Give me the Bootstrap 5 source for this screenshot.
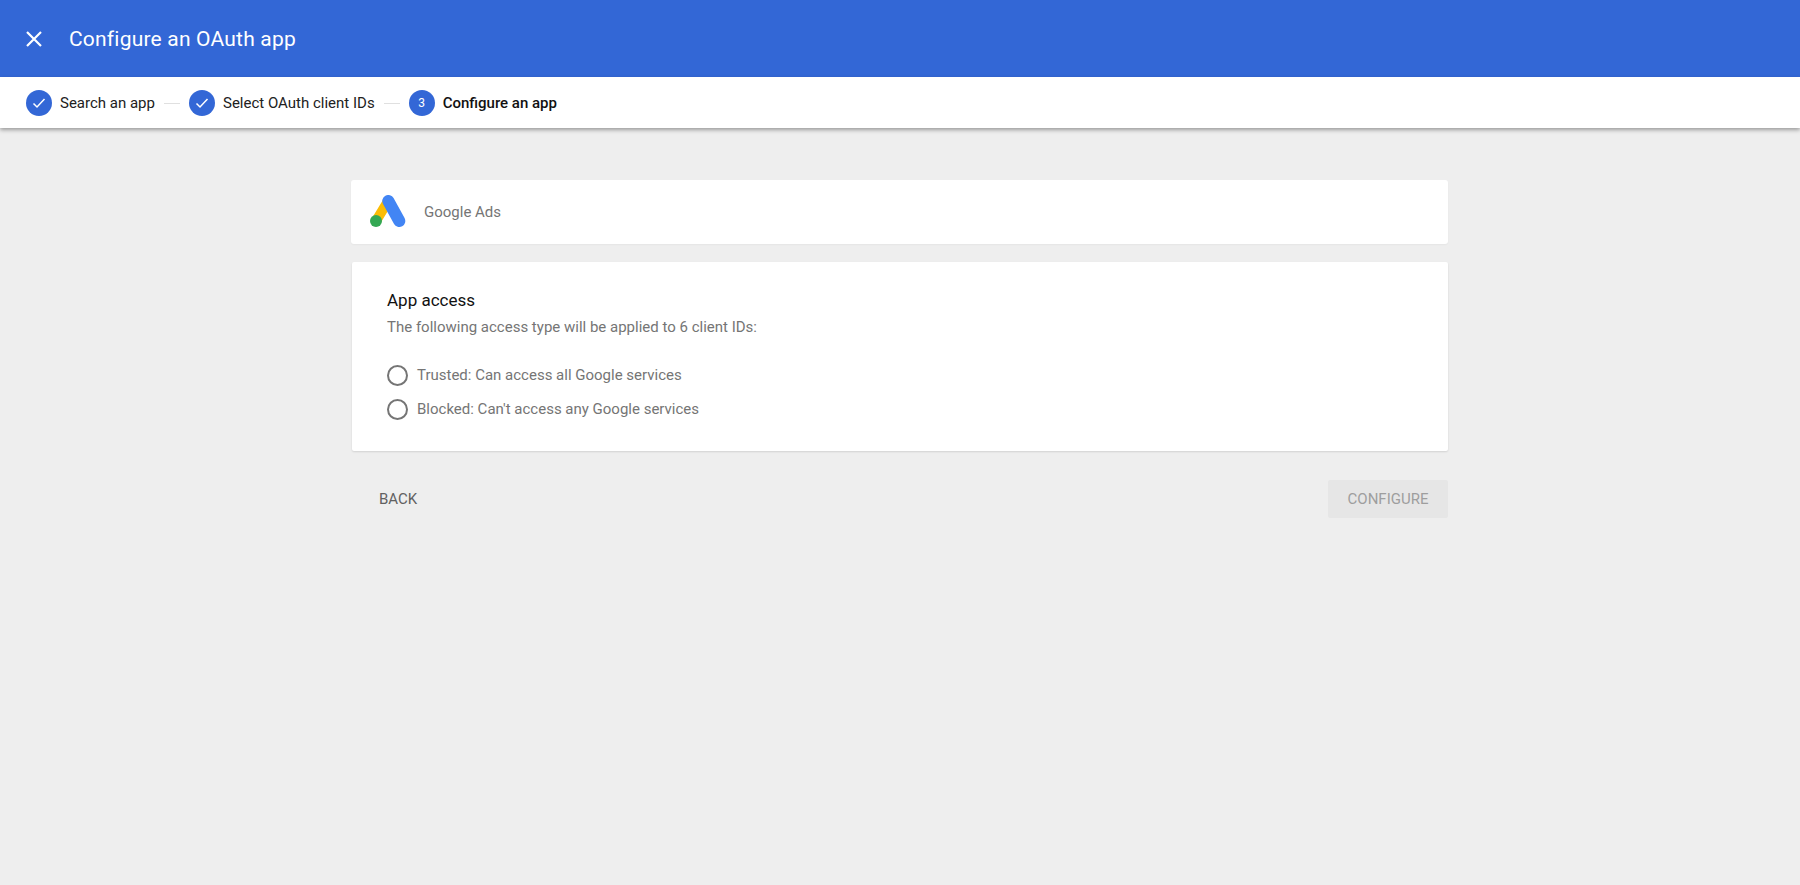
<!doctype html>
<html lang="en">
<head>
<meta charset="utf-8">
<title>Configure an OAuth app</title>
<link rel="stylesheet" href="https://cdn.jsdelivr.net/npm/bootstrap@5.3.0/dist/css/bootstrap.min.css">
<style>
html, body { height: 100%; }
body { background: #eee; font-family: Roboto, "Liberation Sans", sans-serif; color: #202124; overflow: hidden; }
.app-top { background: #3367d6; height: 77px; padding-left: 23px; color: #fff; }
.app-top h1 { font-size: 21px; font-weight: 400; margin: 0 0 0 24px; line-height: 24px; letter-spacing: .2px; }
.stepper { background: #fff; height: 51px; padding: 1px 0 0 26px; font-size: 15px; box-shadow: 0 2px 4px rgba(0,0,0,.35); position: relative; }
.step-dot { width: 26px; height: 26px; border-radius: 50%; background: #3367d6; color: #fff; font-size: 12px; margin-right: 8px; }
.step-line { width: 16px; height: 1px; background: #e0e0e0; margin: 0 9px; }
.step-now { font-weight: 500; color: #111; }
.step-text { color: #212121; }
.page-col { width: 1097px; margin: 52px 0 0 351px; }
.panel-app { height: 64px; padding-left: 19px; border-radius: 3px; color: #757575; font-size: 15px; box-shadow: 0 1px 2px rgba(0,0,0,.04); }
.panel-app svg { margin-right: 16px; }
.panel-access { margin: 18px 0 0 1px; height: 189px; padding: 27px 35px; border-radius: 2px; box-shadow: 0 1px 2px rgba(0,0,0,.12); }
.panel-access h2 { font-size: 17px; font-weight: 400; line-height: 22px; margin: 0 0 6px; color: #111; }
.panel-access p { font-size: 15px; color: #757575; line-height: 20px; margin: 0 0 21px; }
.radio-row { height: 34px; color: #757575; font-size: 15px; }
.radio-ring { width: 21px; height: 21px; border-radius: 50%; border: 2px solid #757575; margin-right: 9px; flex: none; }
.actions { margin-top: 29px; }
.btn-back, .btn-config { font-size: 15px; font-weight: 400; height: 38px; border: 0; border-radius: 2px; text-transform: uppercase; padding: 0; }
.btn-back { color: #616161; background: transparent; width: 94px; }
.btn-config { color: #9e9e9e; background: #e6e6e6; width: 120px; }
</style>
</head>
<body>
<header class="app-top d-flex align-items-center">
  <svg width="22" height="22" viewBox="0 0 22 22" aria-hidden="true"><path d="M4 4 18 18M18 4 4 18" stroke="#fff" stroke-width="2.200" fill="none"/></svg>
  <h1>Configure an OAuth app</h1>
</header>
<nav class="stepper d-flex align-items-center">
  <span class="step-dot d-flex align-items-center justify-content-center"><svg width="16" height="16" viewBox="0 0 16 16" aria-hidden="true"><path d="M2.5 8.5 6 12l7.5-8" stroke="#fff" stroke-width="1.5" fill="none"/></svg></span>
  <span class="step-text">Search an app</span>
  <span class="step-line"></span>
  <span class="step-dot d-flex align-items-center justify-content-center"><svg width="16" height="16" viewBox="0 0 16 16" aria-hidden="true"><path d="M2.5 8.5 6 12l7.5-8" stroke="#fff" stroke-width="1.5" fill="none"/></svg></span>
  <span class="step-text">Select OAuth client IDs</span>
  <span class="step-line"></span>
  <span class="step-dot d-flex align-items-center justify-content-center">3</span>
  <span class="step-now">Configure an app</span>
</nav>
<main class="page-col">
  <section class="panel-app bg-white d-flex align-items-center">
    <svg width="38" height="34" viewBox="0 0 38 34" aria-hidden="true">
      <path d="M17.500 7 6 26" stroke="#fbbc04" stroke-width="10" stroke-linecap="round" fill="none"/>
      <path d="M18.300 6 29.300 26" stroke="#4285f4" stroke-width="12" stroke-linecap="round" fill="none"/>
      <circle cx="6" cy="26" r="6" fill="#34a853"/>
    </svg>
    <span>Google Ads</span>
  </section>
  <section class="panel-access bg-white">
    <h2>App access</h2>
    <p>The following access type will be applied to 6 client IDs:</p>
    <div class="radio-row d-flex align-items-center"><span class="radio-ring"></span>Trusted: Can access all Google services</div>
    <div class="radio-row d-flex align-items-center"><span class="radio-ring"></span>Blocked: Can't access any Google services</div>
  </section>
  <div class="actions d-flex justify-content-between">
    <button class="btn btn-back" type="button">Back</button>
    <button class="btn btn-config" type="button">Configure</button>
  </div>
</main>
<script src="https://cdn.jsdelivr.net/npm/bootstrap@5.3.0/dist/js/bootstrap.bundle.min.js"></script>
</body>
</html>
